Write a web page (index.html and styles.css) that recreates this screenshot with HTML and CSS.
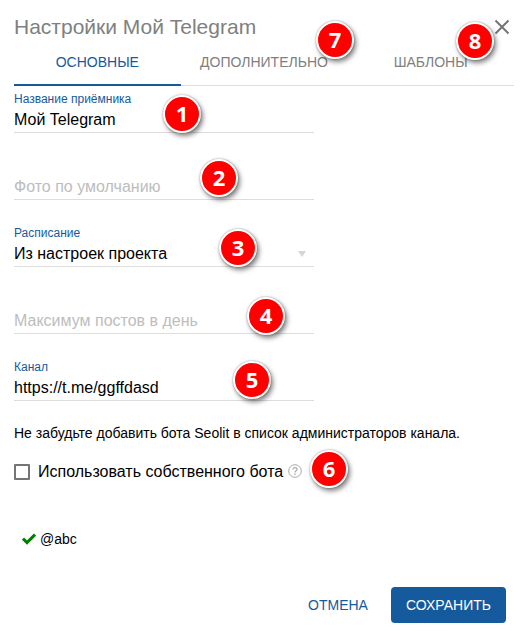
FILE: index.html
```html
<!DOCTYPE html>
<html lang="ru">

<head>
  <meta charset="UTF-8">
  <meta name="viewport" content="width=device-width, initial-scale=1.0">
  <title>Настройки</title>
  <link rel="stylesheet" href="styles.css">
</head>

<body>
  <form class="dialog">
    <!-- Заголовок -->
    <header class="dialog-header">
      <h1 class="dialog-title">Настройки Мой Telegram</h1>
      <button type="button" class="close" aria-label="Закрыть">
        <svg width="16" height="16" viewBox="0 0 16 16" fill="none" stroke="currentColor" stroke-width="2">
          <path d="M1.5 1.5l13 13M14.5 1.5l-13 13" />
        </svg>
      </button>
      <span class="marker marker-close">8</span>
    </header>

    <!-- Вкладки -->
    <nav class="tabs">
      <button type="button" class="tab active">ОСНОВНЫЕ</button>
      <button type="button" class="tab">ДОПОЛНИТЕЛЬНО</button>
      <button type="button" class="tab">ШАБЛОНЫ</button>
      <span class="marker marker-tabs">7</span>
    </nav>

    <!-- Поля -->
    <div class="fields">
      <div class="field">
        <label for="name">Название приёмника</label>
        <input type="text" id="name" value="Мой Telegram">
        <span class="marker marker-name">1</span>
      </div>
      <div class="field">
        <input type="text" id="photo" placeholder="Фото по умолчанию" aria-label="Фото по умолчанию">
        <span class="marker marker-photo">2</span>
      </div>
      <div class="field">
        <label for="schedule">Расписание</label>
        <select id="schedule">
          <option>Из настроек проекта</option>
        </select>
        <svg class="arrow" width="8" height="6" viewBox="0 0 8 6" fill="currentColor">
          <path d="M0 0h8L4 6z" />
        </svg>
        <span class="marker marker-schedule">3</span>
      </div>
      <div class="field">
        <input type="text" id="limit" placeholder="Максимум постов в день" aria-label="Максимум постов в день">
        <span class="marker marker-limit">4</span>
      </div>
      <div class="field">
        <label for="channel">Канал</label>
        <input type="text" id="channel" value="https://t.me/ggffdasd">
        <span class="marker marker-channel">5</span>
      </div>
    </div>

    <p class="note">Не забудьте добавить бота Seolit в список администраторов канала.</p>

    <div class="own-bot">
      <input type="checkbox" id="own-bot">
      <label for="own-bot">Использовать собственного бота</label>
      <svg class="help" width="14" height="14" viewBox="0 0 14 14" fill="none" stroke="currentColor">
        <circle cx="7" cy="7" r="6.3" />
        <path d="M5 5.6C5 4.3 5.8 3.6 7 3.6s2 .7 2 1.8C9 6.7 7 6.9 7 8.5" stroke-width="1.2" />
        <path d="M7 9.6v1.3" stroke-width="1.3" />
      </svg>
      <span class="marker marker-bot">6</span>
    </div>

    <div class="account">
      <svg width="14" height="12" viewBox="0 0 14 12" fill="none" stroke="currentColor" stroke-width="3">
        <path d="M1 5.6l4 4L13 1.6" />
      </svg>
      <span>@abc</span>
    </div>

    <!-- Кнопки -->
    <footer class="actions">
      <button type="button" class="btn">ОТМЕНА</button>
      <button type="submit" class="btn btn-primary">СОХРАНИТЬ</button>
    </footer>
  </form>
</body>

</html>
```

FILE: styles.css
```css
* {
  box-sizing: border-box;
}

body {
  margin: 0;
  background: #fff;
  color: #000;
  font-family: "Liberation Sans", Arial, sans-serif;
  font-size: 14px;
}

button,
input,
select {
  font: inherit;
  color: inherit;
}

button {
  padding: 0;
  border: none;
  background: none;
  cursor: pointer;
}

.dialog {
  padding: 14px;
}

.dialog-header {
  position: relative;
  display: flex;
  justify-content: space-between;
  align-items: center;
  height: 26px;
}

.dialog-title {
  margin: 0;
  font-size: 21px;
  font-weight: normal;
  line-height: 26px;
  color: #808080;
}

.close {
  display: flex;
  padding: 4px;
  color: #757575;
}

/* Вкладки */
.tabs {
  position: relative;
  display: grid;
  grid-template-columns: repeat(3, 1fr);
  height: 46px;
  border-bottom: 1px solid #ddd;
}

.tab {
  height: 46px;
  border-bottom: 2px solid transparent;
  color: #808080;
}

.tab.active {
  border-bottom-color: #155a9c;
  color: #155a9c;
}

/* Поля */
.fields {
  display: grid;
  gap: 20px;
  max-width: 300px;
}

.field {
  position: relative;
  display: flex;
  flex-direction: column;
  justify-content: flex-end;
  height: 47px;
}

.field label {
  font-size: 12px;
  line-height: 15px;
  color: #155a9c;
}

.field input,
.field select {
  width: 100%;
  height: 26px;
  padding: 0;
  border: none;
  border-bottom: 1px solid #ddd;
  border-radius: 0;
  background: none;
  font-size: 16px;
  outline: none;
  appearance: none;
}

.field input::placeholder {
  color: #bdbdbd;
}

.arrow {
  position: absolute;
  right: 8px;
  bottom: 10px;
  color: #d5d5d5;
}

.note {
  margin: 23px 0 20px;
  line-height: 18px;
}

.own-bot {
  position: relative;
  display: flex;
  align-items: center;
  height: 20px;
  font-size: 16px;
}

.own-bot input {
  width: 16px;
  height: 16px;
  margin: 0 8px 0 0;
  border: 2px solid #757575;
  border-radius: 1px;
  appearance: none;
}

.own-bot input:checked {
  background: #155a9c;
}

.help {
  margin: 0 0 2px 5px;
  color: #aaa;
}

.account {
  display: flex;
  align-items: center;
  gap: 4px;
  margin-top: 48px;
  padding-left: 8px;
  line-height: 18px;
}

.account svg {
  color: #008000;
}

.actions {
  display: flex;
  justify-content: flex-end;
  gap: 8px;
  margin-top: 39px;
  padding-right: 8px;
}

.btn {
  height: 36px;
  padding: 0 15px;
  border-radius: 4px;
  color: #155a9c;
}

.btn-primary {
  background: #155a9c;
  color: #fff;
}

/* Номера подсказок */
.marker {
  position: absolute;
  width: 38px;
  height: 38px;
  border: 2px solid #fff;
  border-radius: 50%;
  background: #f00;
  box-shadow: 2px 3px 5px rgba(0, 0, 0, 0.5), 0 0 2px rgba(0, 0, 0, 0.4);
  color: #fff;
  font-family: "Open Sans", sans-serif;
  font-size: 22px;
  font-weight: bold;
  line-height: 32px;
  text-align: center;
  z-index: 1;
}

.marker-name {
  left: 149px;
  top: 9px;
}

.marker-photo {
  left: 186px;
  top: 6px;
}

.marker-schedule {
  left: 205px;
  top: 9px;
}

.marker-limit {
  left: 233px;
  top: 10px;
}

.marker-channel {
  left: 219px;
  top: 7px;
}

.marker-bot {
  left: 296px;
  top: -12px;
}

.marker-tabs {
  left: 302px;
  top: -19px;
}

.marker-close {
  right: 20px;
  top: 8px;
}
```
